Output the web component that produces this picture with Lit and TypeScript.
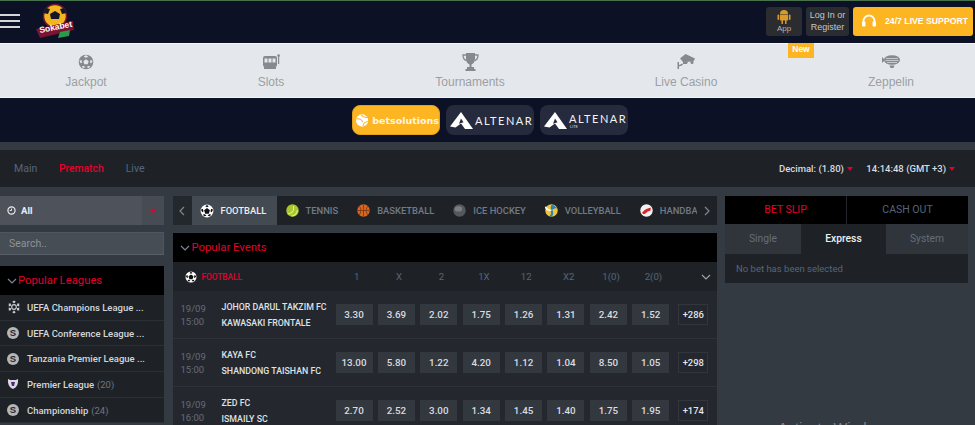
import { LitElement, html, css } from "lit";
import { customElement } from "lit/decorators.js";

const ball = (size: number) => html`<svg class="ic" width=${size} height=${size} viewBox="0 0 24 24"><circle cx="12" cy="12" r="11" fill="#fff"/><path d="M12 7l5 3.6-1.900 5.900H8.900L7 10.600zM12 1.500l-3 2.500 3 1.500 3-1.500zM1.500 10l2.500 4 2-1-1-5zM22.500 10l-2.500 4-2-1 1-5zM7 21l4-1-2.500-2.500-3.500.5zM17 21l-4-1 2.500-2.500 3.500.5z" fill="#111"/></svg>`;
const tennis = html`<svg class="ic" width="13" height="13" viewBox="0 0 24 24"><circle cx="12" cy="12" r="11.500" fill="#a9c52f"/><path d="M3 18c7 1 12-4 11-14M10 22c6 0 11-5 11-11" fill="none" stroke="#e4f08a" stroke-width="2"/></svg>`;
const basket = html`<svg class="ic" width="13" height="13" viewBox="0 0 24 24"><circle cx="12" cy="12" r="11.500" fill="#d9661c"/><path d="M1 12h22M12 1v22M4 4c4 4 4 12 0 16M20 4c-4 4-4 12 0 16" fill="none" stroke="#7a3510" stroke-width="1.500"/></svg>`;
const hockey = html`<svg class="ic" width="13" height="13" viewBox="0 0 24 24"><circle cx="12" cy="12" r="11.500" fill="#55585c"/><ellipse cx="10" cy="9" rx="7" ry="5" fill="#7b7e82"/></svg>`;
const volley = html`<svg class="ic" width="13" height="13" viewBox="0 0 24 24"><circle cx="12" cy="12" r="11.500" fill="#f2c832"/><path d="M12 12C9 6 11 2 14 .8L23 8C18 7 15 9 12 12z" fill="#2f7fc4"/><path d="M12 12c-6 0-10-2-11-7" fill="none" stroke="#fff" stroke-width="3"/><path d="M12 12c2 5 1 9-2 11" fill="none" stroke="#2f7fc4" stroke-width="4"/></svg>`;
const hand = html`<svg class="ic" width="13" height="13" viewBox="0 0 24 24"><circle cx="12" cy="12" r="11.500" fill="#f1f1f1"/><path d="M4 15c3-1 4-5 8-6s5-3 8-2l-1 6c-3-1-5 1-7 3s-5 3-7 2z" fill="#d8232a"/></svg>`;
const chevDown = (c = "#7d8794") => html`<svg class="chev" width="10" height="6" viewBox="0 0 10 6"><path d="M1 1l4 4 4-4" fill="none" stroke=${c} stroke-width="1.200"/></svg>`;
const chevSide = (d: string) => html`<svg width="6" height="10" viewBox="0 0 6 10"><path d=${d} fill="none" stroke="#7d8794" stroke-width="1.200"/></svg>`;
const caret = html`<span class="caret"></span>`;

const altenarMark = html`<svg width="23" height="17" viewBox="0 0 23 17"><path d="M11 0L23 17H15L11 11.500 5.500 15.500 0 14.500z" fill="#fff"/><path d="M11 6.500l2.500 3.800-4.500 1.400z" fill="#262a3d"/></svg>`;

const navIcons = {
  jackpot: html`<svg width="16" height="16" viewBox="0 0 24 24"><circle cx="12" cy="12" r="11" fill="#86898d"/><path d="M12 8l4 3-1.500 4.500h-5L8 11zM12 1.500L8.500 4 12 5.500 15.500 4zM2 10l2 4 2-1-.7-4zM22 10l-2 4-2-1 .7-4zM7.500 21l3.500-1-2-2-3.500.5zM16.500 21L13 20l2-2 3.500.5z" fill="#e4e8ec"/></svg>`,
  slots: html`<svg width="17" height="15" viewBox="0 0 17 15"><rect x="0" y="2" width="14" height="11" rx="2" fill="#86898d"/><rect x="1.500" y="4.500" width="3" height="4" fill="#e4e8ec"/><rect x="5.500" y="4.500" width="3" height="4" fill="#e4e8ec"/><rect x="9.500" y="4.500" width="3" height="4" fill="#e4e8ec"/><rect x="1" y="13" width="12" height="2" fill="#86898d"/><rect x="15" y="2" width="1.200" height="8" fill="#86898d"/><circle cx="15.600" cy="1.500" r="1.300" fill="#86898d"/></svg>`,
  trophy: html`<svg width="17" height="18" viewBox="0 0 17 18"><path d="M4 0h9v6c0 3-2 5-3.500 5.500V14H12v2H5v-2h2.500v-2.500C6 11 4 9 4 6z" fill="#86898d"/><path d="M4 2H1c0 3 1 5 3.500 5.500M13 2h3c0 3-1 5-3.500 5.500" fill="none" stroke="#86898d" stroke-width="1.300"/><rect x="3.500" y="16" width="10" height="2" fill="#86898d"/></svg>`,
  camera: html`<svg width="18" height="15" viewBox="0 0 18 15"><path d="M3 4.500L8.500 0 18 4.500 16.500 7.500 6 8z" fill="#86898d"/><path d="M6 7l5 .5-1 2.500-4 0zM.5 8v7h1.500v-2.500l4-1.500-.5-1.500L2 11V8z" fill="#86898d"/><circle cx="15" cy="8.500" r="1.500" fill="#86898d"/></svg>`,
  zep: html`<svg width="18" height="13" viewBox="0 0 18 13"><ellipse cx="10" cy="5" rx="8" ry="4.800" fill="#86898d"/><path d="M3 5L0 2v6z" fill="#86898d"/><path d="M4 3.500h12M3.500 5.500h13M5 7.500h10" stroke="#e4e8ec" stroke-width=".7"/><path d="M7.500 10.500h5l-1 2.500h-3z" fill="#86898d"/></svg>`,
};

const leagueIcon = {
  ucl: html`<svg class="lg" width="14" height="14" viewBox="0 0 24 24"><g fill="#c9ccd0"><circle cx="12" cy="12" r="4" fill="none" stroke="#c9ccd0" stroke-width="2"/><path d="M12 1l3 2-3 3-3-3zM12 23l3-2-3-3-3 3zM3 6l3.500 0 .5 4-4 1zM21 6l-3.500 0-.5 4 4 1zM3 18l3.500 0 .5-4-4-1zM21 18l-3.500 0-.5-4 4-1z"/></g></svg>`,
  s: html`<span class="s">S</span>`,
  pl: html`<svg class="lg" width="12" height="12" viewBox="0 0 24 24"><path d="M2 2c3 2 5 2 10 2s7 0 10-2c1 9-2 17-10 20C4 19 1 11 2 2z" fill="#d9d9e6"/><path d="M8 8h8l-2 8h-4z" fill="#4b2a6e"/></svg>`,
};

const leagues = [
  { i: leagueIcon.ucl, t: "UEFA Champions League ...", c: "" },
  { i: leagueIcon.s, t: "UEFA Conference League ...", c: "" },
  { i: leagueIcon.s, t: "Tanzania Premier League ...", c: "" },
  { i: leagueIcon.pl, t: "Premier League", c: "(20)" },
  { i: leagueIcon.s, t: "Championship", c: "(24)" },
];

const sports = [
  { i: ball(14), t: "FOOTBALL", on: true },
  { i: tennis, t: "TENNIS", on: false },
  { i: basket, t: "BASKETBALL", on: false },
  { i: hockey, t: "ICE HOCKEY", on: false },
  { i: volley, t: "VOLLEYBALL", on: false },
  { i: hand, t: "HANDBALL", on: false },
];

const markets = ["1", "X", "2", "1X", "12", "X2", "1(0)", "2(0)"];

const events = [
  { d: "19/09", h: "15:00", a: "JOHOR DARUL TAKZIM FC", b: "KAWASAKI FRONTALE", o: ["3.30", "3.69", "2.02", "1.75", "1.26", "1.31", "2.42", "1.52"], m: "+286" },
  { d: "19/09", h: "15:00", a: "KAYA FC", b: "SHANDONG TAISHAN FC", o: ["13.00", "5.80", "1.22", "4.20", "1.12", "1.04", "8.50", "1.05"], m: "+298" },
  { d: "19/09", h: "16:00", a: "ZED FC", b: "ISMAILY SC", o: ["2.70", "2.52", "3.00", "1.34", "1.45", "1.40", "1.75", "1.95"], m: "+174" },
];

@customElement("app-root")
export class AppRoot extends LitElement {
  static styles = css`
    :host { display: block; width: 975px; height: 425px; overflow: hidden; position: relative; background: #343a41; font-family: Roboto, "Liberation Sans", sans-serif; }
    * { box-sizing: border-box; }
    .top { height: 43px; background: #0c1126; border-top: 1px solid #47734c; display: flex; align-items: center; position: relative; }
    .burger { width: 20px; display: flex; flex-direction: column; gap: 4px; margin-bottom: 2px; }
    .burger i { display: block; height: 2px; background: #d4d6da; }
    .logo { margin-left: 16px; margin-top: -1px; display: block; }
    .top-right { margin-left: auto; display: flex; gap: 4px; padding-right: 2px; margin-top: -2px; }
    .tbtn { height: 29px; border-radius: 3px; background: #2b2c2f; color: #c4c6c9; font: 9px/11px "Liberation Sans", sans-serif; display: flex; flex-direction: column; align-items: center; justify-content: center; text-align: center; }
    .app { width: 36px; font-size: 8px; line-height: 9px; color: #b5b7ba; }
    .login { width: 43px; font-size: 9px; line-height: 12.500px; }
    .support { width: 120px; background: #fdb522; color: #fff; font: bold 8.700px "Liberation Sans", sans-serif; flex-direction: row; justify-content: flex-start; padding-left: 9px; gap: 9px; }
    .nav { height: 55px; background: #e4e8ec; border-top: 1px solid #f4f5f7; border-bottom: 1px solid #f4f5f7; display: grid; grid-template-columns: 172px 198px 200px 232px 173px; position: relative; }
    .nav-item { display: flex; flex-direction: column; align-items: center; color: #9c9fa3; font: 12px/14px "Liberation Sans", sans-serif; padding-top: 7px; }
    .nav-icon { height: 21px; display: flex; align-items: center; }
    .nav-label { padding-top: 3px; }
    .zep { padding-left: 5px; }
    .new { position: absolute; left: 788px; top: -1px; width: 26px; height: 15px; background: #fdb522; color: #fff; font: bold 8.500px/13px "Liberation Sans", sans-serif; text-align: center; }
    .prov { height: 44px; background: #0c1126; display: flex; padding: 7px 0 0 352px; gap: 6px; }
    .pbtn { width: 88px; height: 30px; border-radius: 8px; background: #262a3d; display: flex; align-items: center; gap: 2px; padding-left: 4px; color: #f2f3f5; }
    .pbtn.on { background: #fdb522; padding-left: 3px; gap: 4px; border: 1px solid #e2a21d; }
    .bs { font: bold 9.500px "DejaVu Sans", sans-serif; color: #fff6e2; }
    .alt { font: 400 11px/11px Lato, sans-serif; letter-spacing: 1.500px; position: relative; }
    .alt.up { margin-bottom: 4px; }
    .lite { position: absolute; left: 1px; top: 12px; font: 4px/4px Roboto, sans-serif; letter-spacing: 0; color: #ddd; }
    .strip { height: 8px; background: #343a41; }
    .sub { height: 37px; background: #1e2227; display: flex; align-items: center; padding: 0 20px 0 14px; font-size: 10.600px; color: #56657b; }
    .sub a.red { color: #e4002b; margin-left: 21.500px; margin-right: 22px; font-size: 10.300px; font-weight: 500; }
    .sub-right { margin-left: auto; display: flex; gap: 13.500px; color: #d9dce0; font-size: 9.500px; font-weight: 500; }
    .caret { display: inline-block; margin-left: 3px; margin-bottom: 1px; border-left: 3.500px solid transparent; border-right: 3.500px solid transparent; border-top: 4px solid #e4002b; }
    .main { display: grid; grid-template-columns: 164px 544px 243px; column-gap: 8.500px; padding-top: 9px; }
    .all { height: 29px; background: #4e535b; display: flex; align-items: center; padding-left: 7px; color: #eceef0; font-size: 9.500px; font-weight: 700; gap: 5px; }
    .all .drop { margin-left: auto; width: 22px; height: 100%; background: #474c54; display: flex; align-items: center; justify-content: center; }
    .drop .caret { margin: 0; border-left-width: 4px; border-right-width: 4px; }
    .search { height: 23px; margin-top: 7px; background: #474d55; border-bottom: 1px solid #5a6069; border-top: 1px solid #50565e; border-right: 1px solid #50565e; color: #8d939b; font-size: 10.500px; display: flex; align-items: center; padding-left: 9px; }
    .black { background: #000; display: flex; align-items: center; color: #e4002b; font-size: 11.300px; height: 29px; }
    .pl-head { margin-top: 11px; padding-left: 7px; gap: 1px; }
    .row { height: 25.700px; background: #1e2227; border-bottom: 1px solid #2b3036; display: flex; align-items: center; padding-left: 7px; color: #d3d6da; font-size: 9.500px; font-weight: 500; white-space: nowrap; }
    .lg-wrap { width: 20px; display: flex; align-items: center; flex: none; }
    .lg { display: block; }
    .s { width: 12px; height: 12px; border-radius: 50%; background: #b4b6b9; color: #24282d; font: bold 9.500px/12px "Liberation Sans", sans-serif; text-align: center; }
    .count { color: #6f7680; margin-left: 3px; font-weight: 400; }
    .tabs { height: 29px; background: #1e2227; display: flex; align-items: stretch; }
    .arrow { width: 19px; flex: none; display: flex; align-items: center; justify-content: center; background: #23282d; }
    .arrow.end { width: 20px; background: #1e2227; }
    .tab-track { display: flex; flex: 1; overflow: hidden; min-width: 0; }
    .tab { display: flex; align-items: center; gap: 7px; flex: none; padding: 0 10px 0 9px; color: #717a86; font-size: 9.400px; font-weight: 500; }
    .tab.on { background: #444a52; color: #eceef0; width: 85px; padding-left: 8px; }
    .ic { flex: none; display: block; }
    .pe { margin-top: 8px; padding-left: 7px; gap: 2px; }
    .ev-head { height: 29px; background: #1e2227; display: flex; align-items: center; color: #56657b; font-size: 9.600px; }
    .ev-sport { width: 163px; padding-left: 12px; display: flex; gap: 5px; align-items: center; color: #e4002b; font-size: 8.300px; font-weight: 500; }
    .mk { width: 42.400px; text-align: center; flex: none; }
    .ev-chev { margin-left: 26px; display: flex; }
    .ev { height: 48px; background: #24282e; border-bottom: 1px solid #2d3238; display: flex; align-items: center; }
    .time { width: 49px; padding-left: 8px; flex: none; color: #646c77; font-size: 9.500px; line-height: 13px; }
    .teams { width: 114px; flex: none; color: #dfe1e4; font-size: 8.800px; font-weight: 500; line-height: 16px; white-space: nowrap; }
    .odds { display: flex; gap: 5.400px; flex: none; }
    .odd { width: 37px; height: 21px; background: #33383f; color: #d9dce0; font-size: 9.800px; font-weight: 500; display: flex; align-items: center; justify-content: center; }
    .more { margin-left: 9px; width: 30px; height: 21px; border: 1px solid #31363c; color: #e3e5e8; font-size: 9.400px; font-weight: 500; display: flex; align-items: center; justify-content: center; }
    .slip { display: grid; grid-template-columns: 122px 1fr; height: 28px; background: #000; font-size: 10.500px; text-align: center; line-height: 28px; color: #56657b; }
    .slip .a { color: #e4002b; border-right: 1px solid #23272c; }
    .stabs { display: grid; grid-template-columns: 76px 85px 82px; height: 30px; text-align: center; line-height: 30px; font-size: 10.300px; color: #636d7b; background: #1e2227; }
    .stabs div { background: #30353c; }
    .stabs .on { background: #1e2227; color: #eceef0; font-weight: 500; }
    .nobet { height: 29px; background: #1e2227; color: #56657b; font-size: 9.500px; padding-left: 11px; display: flex; align-items: center; }
    .wm { position: absolute; left: 778px; top: 420px; color: #7c8087; font: 14.500px "Liberation Sans", sans-serif; white-space: nowrap; pointer-events: none; }
  `;

  private header() {
    return html`<div class="top">
      <div class="burger"><i></i><i></i><i></i></div>
      <svg class="logo" width="38" height="37" viewBox="0 0 38 37">
        <circle cx="19" cy="13" r="11.500" fill="#f2b61e" stroke="#7c1234" stroke-width="1.500"/>
        <path d="M19 8l5 3-1 5h-8l-1-5zM10 5l4 1-2 5-5-1zM28 5l-4 1 2 5 5-1z" fill="#17172b"/>
        <path d="M0 26l37-8 1 9-34 8z" fill="#7c1234"/>
        <path d="M24 29l10-2-1 6-11 2z" fill="#2c9a4a"/>
        <text x="4" y="30" transform="rotate(-11 4 30)" font-family="Liberation Sans" font-weight="700" font-size="8.500" fill="#fff">Sokabet</text>
      </svg>
      <div class="top-right">
        <div class="tbtn app">
          <svg width="14" height="15" viewBox="0 0 14 15"><path d="M3 5a4 4 0 0 1 8 0z" fill="#d99a2b"/><path d="M3 5.600h8v6H9.500V15H8v-3.400H6V15H4.500v-3.400H3z" fill="#d99a2b"/><rect x=".5" y="5.600" width="1.700" height="5.500" rx=".8" fill="#d99a2b"/><rect x="11.800" y="5.600" width="1.700" height="5.500" rx=".8" fill="#d99a2b"/></svg>
          <span>App</span>
        </div>
        <div class="tbtn login"><span>Log In or</span><span>Register</span></div>
        <div class="tbtn support">
          <svg width="14" height="14" viewBox="0 0 14 14"><path d="M1.500 9V7a5.500 5.500 0 0 1 11 0v2" fill="none" stroke="#fff" stroke-width="1.800"/><rect x="0" y="7.500" width="3.500" height="5" rx="1" fill="#fff"/><rect x="10.500" y="7.500" width="3.500" height="5" rx="1" fill="#fff"/></svg>
          <span>24/7 LIVE SUPPORT</span>
        </div>
      </div>
    </div>`;
  }

  private nav() {
    const items = [
      ["Jackpot", navIcons.jackpot, ""],
      ["Slots", navIcons.slots, ""],
      ["Tournaments", navIcons.trophy, ""],
      ["Live Casino", navIcons.camera, ""],
      ["Zeppelin", navIcons.zep, "zep"],
    ] as const;
    return html`<div class="nav">
      ${items.map(([t, i, c]) => html`<div class="nav-item ${c}"><div class="nav-icon">${i}</div><div class="nav-label">${t}</div></div>`)}
      <div class="new">New</div>
    </div>`;
  }

  private providers() {
    return html`<div class="prov">
      <div class="pbtn on">
        <svg width="13" height="13" viewBox="0 0 24 24"><circle cx="12" cy="12" r="12" fill="#fff"/><path d="M1 9c6-1 10 1 12 6M10 1c3 4 8 6 13 5M14 23c0-4 3-8 9-9" fill="none" stroke="#fdb522" stroke-width="2"/></svg>
        <span class="bs">betsolutions</span>
      </div>
      <div class="pbtn">${altenarMark}<span class="alt">ALTENAR</span></div>
      <div class="pbtn">${altenarMark}<span class="alt up">ALTENAR<span class="lite">LITE</span></span></div>
    </div>`;
  }

  private left() {
    return html`<div>
      <div class="all">
        <svg width="9" height="9" viewBox="0 0 10 10"><circle cx="5" cy="5" r="4" fill="none" stroke="#eceef0" stroke-width="1.300"/><path d="M5 2.800V5H3" fill="none" stroke="#eceef0"/></svg>
        <span>All</span><div class="drop"><span class="caret"></span></div>
      </div>
      <div class="search">Search..</div>
      <div class="black pl-head">${chevDown()}<span>Popular Leagues</span></div>
      ${leagues.map((l) => html`<div class="row"><span class="lg-wrap">${l.i}</span><span>${l.t}</span>${l.c ? html`<span class="count">${l.c}</span>` : ""}</div>`)}
    </div>`;
  }

  private center() {
    return html`<div>
      <div class="tabs">
        <div class="arrow">${chevSide("M5 1L1 5l4 4")}</div>
        <div class="tab-track">${sports.map((s) => html`<div class="tab ${s.on ? "on" : ""}">${s.i}<span>${s.t}</span></div>`)}</div>
        <div class="arrow end">${chevSide("M1 1l4 4-4 4")}</div>
      </div>
      <div class="black pe">${chevDown()}<span>Popular Events</span></div>
      <div class="ev-head">
        <div class="ev-sport">${ball(12)}<span>FOOTBALL</span></div>
        ${markets.map((m) => html`<div class="mk">${m}</div>`)}
        <div class="ev-chev">${chevDown("#9aa1aa")}</div>
      </div>
      ${events.map((e) => html`<div class="ev">
        <div class="time">${e.d}<br />${e.h}</div>
        <div class="teams">${e.a}<br />${e.b}</div>
        <div class="odds">${e.o.map((o) => html`<div class="odd">${o}</div>`)}</div>
        <div class="more">${e.m}</div>
      </div>`)}
    </div>`;
  }

  private right() {
    return html`<div>
      <div class="slip"><div class="a">BET SLIP</div><div>CASH OUT</div></div>
      <div class="stabs"><div>Single</div><div class="on">Express</div><div>System</div></div>
      <div class="nobet">No bet has been selected</div>
    </div>`;
  }

  render() {
    return html`
      ${this.header()}
      ${this.nav()}
      ${this.providers()}
      <div class="strip"></div>
      <div class="sub">
        <a>Main</a><a class="red">Prematch</a><a>Live</a>
        <div class="sub-right"><span>Decimal: (1.80)${caret}</span><span>14:14:48 (GMT +3)${caret}</span></div>
      </div>
      <div class="main">${this.left()}${this.center()}${this.right()}</div>
      <div class="wm">Activate Windows</div>
    `;
  }
}
